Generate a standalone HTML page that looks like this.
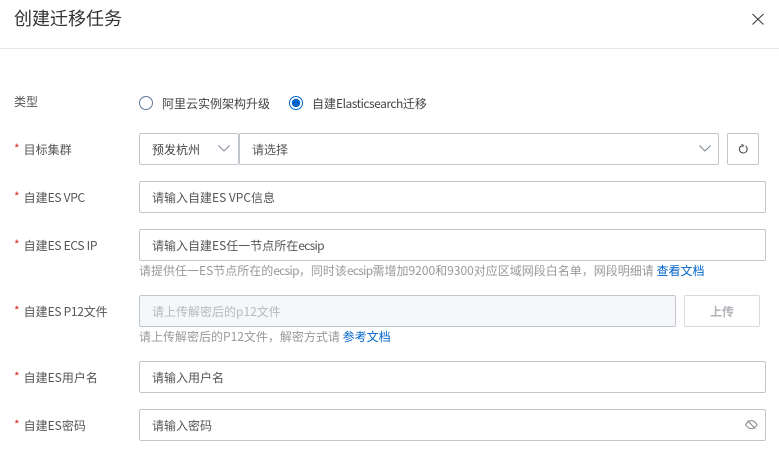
<!DOCTYPE html>
<html lang="zh">
<head>
<meta charset="utf-8">
<style>
html,body{margin:0;padding:0;background:#fff;}
body{width:779px;height:450px;position:relative;overflow:hidden;font-family:"Noto Sans CJK SC","Liberation Sans",sans-serif;font-size:12px;color:#333;}
.a{position:absolute;white-space:nowrap;}
.t{line-height:16px;height:16px;}
.box{position:absolute;box-sizing:border-box;height:32px;border:1px solid #c0c6cc;border-radius:2px;background:#fff;line-height:31px;padding-left:12px;color:#555;white-space:nowrap;}
.lab{left:14px;color:#555;}
.lab i{font-style:normal;color:#d93026;margin-right:4px;position:relative;top:-1px;}
.help{left:139px;color:#999;}
.help a{color:#0064c8;text-decoration:none;}
.e{letter-spacing:-.7px;}
.s{letter-spacing:-.5px;}
.m{letter-spacing:-.3px;}
svg{position:absolute;display:block;}
</style>
</head>
<body>
<div class="a" style="left:14px;top:6px;font-size:18px;line-height:24px;color:#333;">创建迁移任务</div>
<svg style="left:752px;top:13px" width="12" height="12" viewBox="0 0 12 12"><path d="M0.5 1L11.5 11.5M11.5 1L0.5 11.5" stroke="#333" stroke-width="1" fill="none"/></svg>
<div class="a" style="left:0;top:48px;width:779px;height:1px;background:#e5e8eb;"></div>

<div class="a t lab" style="top:94px;">类型</div>
<svg style="left:139px;top:96px" width="14" height="14" viewBox="0 0 14 14"><circle cx="7" cy="7" r="6.5" fill="#fff" stroke="#5f7a96" stroke-width="1"/></svg>
<div class="a t" style="left:162px;top:96px;color:#444;">阿里云实例架构升级</div>
<svg style="left:289px;top:96px" width="14" height="14" viewBox="0 0 14 14"><circle cx="7" cy="7" r="6.5" fill="#fff" stroke="#0064c8" stroke-width="1"/><circle cx="7" cy="7" r="4.2" fill="#0064c8"/></svg>
<div class="a t" style="left:312px;top:96px;color:#444;">自建<span class="s">Elasticsearch</span>迁移</div>

<div class="a t lab" style="top:142px;"><i>*</i>目标集群</div>
<div class="box" style="left:139px;top:133px;width:100px;color:#444;">预发杭州</div>
<svg style="left:218px;top:144px" width="12" height="9" viewBox="0 0 12 9"><path d="M0.5 1.5L6 7L11.5 1.5" stroke="#808a94" stroke-width="1.1" fill="none"/></svg>
<div class="box" style="left:239px;top:133px;width:480px;">请选择</div>
<svg style="left:699px;top:144px" width="12" height="9" viewBox="0 0 12 9"><path d="M0.5 1.5L6 7L11.5 1.5" stroke="#808a94" stroke-width="1.1" fill="none"/></svg>
<div class="box" style="left:727px;top:133px;width:32px;"></div>
<svg style="left:738px;top:143px" width="11" height="12" viewBox="0 0 11 12"><path d="M7.6 3A3.9 3.9 0 1 1 3.6 2.6" stroke="#444" stroke-width="1" fill="none"/><path d="M3.4 1L5.6 2.6L3.6 4.2" stroke="#444" stroke-width="0.9" fill="none"/></svg>

<div class="a t lab" style="top:190px;"><i>*</i>自建<span class="m">ES VPC</span></div>
<div class="box" style="left:139px;top:181px;width:627px;">请输入自建ES VPC信息</div>

<div class="a t lab" style="top:238px;"><i>*</i>自建<span class="m">ES ECS IP</span></div>
<div class="box" style="left:139px;top:229px;width:627px;">请输入自建ES任一节点所在<span class="e">ecsip</span></div>
<div class="a t help" style="top:263px;">请提供任一ES节点所在的<span class="e">ecsip</span>，同时该<span class="e">ecsip</span>需增加9200和9300对应区域网段白名单，网段明细请 <a>查看文档</a></div>

<div class="a t lab" style="top:304px;"><i>*</i>自建<span class="m">ES P12</span>文件</div>
<div class="box" style="left:139px;top:295px;width:537px;background:#f6f7f8;color:#b5b9bd;">请上传解密后的p12文件</div>
<div class="box" style="left:684px;top:295px;width:76px;padding:0;text-align:center;border-color:#d6dade;color:#b0b4b8;font-weight:bold;">上传</div>
<div class="a t help" style="top:329px;">请上传解密后的P12文件，解密方式请 <a>参考文档</a></div>

<div class="a t lab" style="top:370px;"><i>*</i>自建ES用户名</div>
<div class="box" style="left:139px;top:361px;width:627px;">请输入用户名</div>

<div class="a t lab" style="top:418px;"><i>*</i>自建ES密码</div>
<div class="box" style="left:139px;top:409px;width:627px;">请输入密码</div>
<svg style="left:745px;top:419px" width="13" height="12" viewBox="0 0 13 12"><path d="M0.6 5.6C2.2 3 4.2 1.6 6.3 1.6S10.4 3 12 5.6C10.4 8.2 8.4 9.6 6.3 9.6S2.2 8.2 0.6 5.6Z" stroke="#888" stroke-width="1" fill="none"/><path d="M2.6 1.6L10.2 9.6" stroke="#888" stroke-width="1" fill="none"/></svg>
</body>
</html>
